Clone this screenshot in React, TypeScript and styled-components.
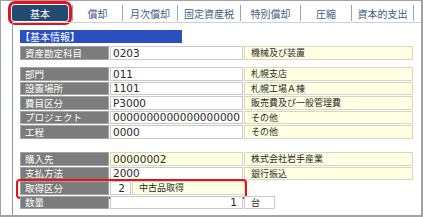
import React from "react";
import styled, { createGlobalStyle } from "styled-components";

const Global = createGlobalStyle`
  html, body { margin: 0; padding: 0; background: #fff; }
  body { font-family: "DejaVu Sans", "Noto Sans CJK JP", sans-serif; }
`;

const Frame = styled.div`
  width: 423px;
  height: 217px;
  box-sizing: border-box;
  border: 1px solid #a3a3a3;
  border-right-width: 2px;
  border-bottom-width: 2px;
  background: #fff;
  overflow: hidden;
  display: flex;
  flex-direction: column;
`;

const TabBar = styled.div`
  display: flex;
  align-items: flex-end;
  height: 21px;
  flex: none;
  padding-left: 11px;
  box-sizing: border-box;
`;

const Tab = styled.div<{ $active?: boolean; $w: number; $lead?: boolean; $mark?: boolean }>`
  width: ${(p) => p.$w}px;
  height: 16px;
  margin-bottom: 1px;
  flex: none;
  box-sizing: border-box;
  display: flex;
  align-items: center;
  justify-content: center;
  font-family: "Noto Sans CJK JP", sans-serif;
  font-size: 10px;
  white-space: nowrap;
  overflow: hidden;
  color: ${(p) => (p.$active ? "#ffffff" : "#3d5d80")};
  background: ${(p) => (p.$active ? "#24496f" : "#ffffff")};
  border-radius: ${(p) => (p.$active ? "3px" : "0")};
  ${(p) => (p.$active ? "margin-right: 4px;" : "border-right: 1px solid #8ea6c0;")}
  ${(p) => (p.$lead ? "border-left: 1px solid #8ea6c0;" : "")}
  ${(p) => (p.$mark ? "outline: 3px solid #e3121b; outline-offset: 1.5px;" : "")}
`;

const Panel = styled.div`
  flex: 1;
  margin-left: 11px;
  border-left: 1px solid #7f9db9;
  border-top: 1px solid #c9d1da;
  padding: 7px 0 0 7px;
  display: flex;
  flex-direction: column;
`;

const SectionHeader = styled.div`
  width: 162px;
  height: 13px;
  background: #2a4fc0;
  color: #ffffff;
  font-family: "Noto Sans CJK JP", sans-serif;
  font-size: 10px;
  line-height: 13px;
  white-space: nowrap;
`;

const Group = styled.div<{ $gap: number }>`
  width: 393px;
  margin-top: ${(p) => p.$gap}px;
  display: flex;
  flex-direction: column;
  gap: 1px;
`;

const Row = styled.div`
  position: relative;
  display: flex;
  gap: 1px;
  height: 13.5px;
`;

const Label = styled.div`
  width: 89px;
  flex: none;
  box-sizing: border-box;
  background: #7c7c7c;
  border: 1px solid #a2a2a2;
  color: #ffffff;
  font-family: "Noto Sans CJK JP", sans-serif;
  font-size: 9.5px;
  padding-left: 4px;
  display: flex;
  align-items: center;
  white-space: nowrap;
`;

const Cell = styled.div<{ $w?: number; $yellow?: boolean; $right?: boolean; $jp?: boolean }>`
  ${(p) => (p.$w ? `width: ${p.$w}px; flex: none;` : "flex: 1;")}
  box-sizing: border-box;
  border: 1px solid ${(p) => (p.$yellow ? "#d6d6c4" : "#c9c9c9")};
  background: ${(p) => (p.$yellow ? "#ffffe2" : "#ffffff")};
  color: #2a2a2a;
  font-family: ${(p) => (p.$jp ? '"Noto Sans CJK JP", sans-serif' : '"DejaVu Sans", "Noto Sans CJK JP", sans-serif')};
  font-size: ${(p) => (p.$jp ? "9px" : "10.5px")};
  padding: 0 ${(p) => (p.$right ? "5px" : "2px")} 0 ${(p) => (p.$jp ? "6px" : "2px")};
  display: flex;
  align-items: center;
  justify-content: ${(p) => (p.$right ? "flex-end" : "flex-start")};
  white-space: nowrap;
  overflow: hidden;
`;

const Highlight = styled.span`
  position: absolute;
  left: -4px;
  top: -2px;
  bottom: -4px;
  width: 231px;
  box-sizing: border-box;
  border: 2.5px solid #e3121b;
  border-radius: 4px;
  pointer-events: none;
`;

type Item = { label: string; code: string; name?: string; codeYellow?: boolean };

const group2: Item[] = [
  { label: "部門", code: "011", name: "札幌支店" },
  { label: "設置場所", code: "1101", name: "札幌工場Ａ棟" },
  { label: "費目区分", code: "P3000", name: "販売費及び一般管理費" },
  { label: "プロジェクト", code: "0000000000000000000", name: "その他" },
  { label: "工程", code: "0000", name: "その他" },
];

const tabs = [
  { t: "償却", w: 51 },
  { t: "月次償却", w: 55 },
  { t: "固定資産税", w: 63 },
  { t: "特別償却", w: 60 },
  { t: "圧縮", w: 51 },
  { t: "資本的支出", w: 62 },
  { t: "", w: 20 },
];

const StdRow = ({ it }: { it: Item }) => (
  <Row>
    <Label>{it.label}</Label>
    <Cell $w={133} $yellow={it.codeYellow}>{it.code}</Cell>
    <Cell $yellow $jp>{it.name}</Cell>
  </Row>
);

export default function App() {
  return (
    <>
      <Global />
      <Frame>
        <TabBar>
          <Tab $active $mark $w={56}>基本</Tab>
          {tabs.map((t, i) => (
            <Tab key={i} $w={t.w} $lead={i === 0}>
              {t.t}
            </Tab>
          ))}
        </TabBar>
        <Panel>
          <SectionHeader>【基本情報】</SectionHeader>
          <Group $gap={3}>
            <StdRow it={{ label: "資産勘定科目", code: "0203", name: "機械及び装置" }} />
          </Group>
          <Group $gap={7.5}>
            {group2.map((it) => (
              <StdRow key={it.label} it={it} />
            ))}
          </Group>
          <Group $gap={13.5}>
            <StdRow it={{ label: "購入先", code: "00000002", name: "株式会社岩手産業", codeYellow: true }} />
            <StdRow it={{ label: "支払方法", code: "2000", name: "銀行振込" }} />
            <Row>
              <Label>取得区分</Label>
              <Cell $w={21} $right>2</Cell>
              <Cell $w={113} $yellow $jp>中古品取得</Cell>
              <Highlight />
            </Row>
            <Row>
              <Label>数量</Label>
              <Cell $w={133} $right>1</Cell>
              <Cell $w={31} $jp>台</Cell>
            </Row>
          </Group>
        </Panel>
      </Frame>
    </>
  );
}
